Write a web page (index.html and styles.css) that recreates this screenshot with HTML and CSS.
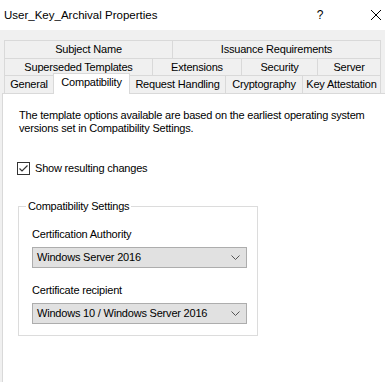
FILE: index.html
```html
<!DOCTYPE html>
<html lang="en">
<head>
    <meta charset="UTF-8">
    <title>User_Key_Archival Properties</title>
    <link rel="stylesheet" href="styles.css">
</head>
<body>
    <div class="window">
        <div class="title-bar">
            <span class="title">User_Key_Archival Properties</span>
            <span class="help">?</span>
            <svg class="close" width="12" height="12" viewBox="0 0 12 12">
                <path d="M1 1 L11 11 M11 1 L1 11" stroke="#000" stroke-width="1" fill="none"/>
            </svg>
        </div>

        <div class="body">
            <div class="tabs">
                <div class="tab-row row-1">
                    <div class="tab t-subject">Subject Name</div>
                    <div class="tab t-issuance">Issuance Requirements</div>
                </div>
                <div class="tab-row row-2">
                    <div class="tab t-superseded">Superseded Templates</div>
                    <div class="tab t-extensions">Extensions</div>
                    <div class="tab t-security">Security</div>
                    <div class="tab t-server">Server</div>
                </div>
                <div class="tab-row row-3">
                    <div class="tab t-general">General</div>
                    <div class="tab t-compat active">Compatibility</div>
                    <div class="tab t-request">Request Handling</div>
                    <div class="tab t-crypto">Cryptography</div>
                    <div class="tab t-key">Key Attestation</div>
                </div>
            </div>

            <div class="panel">
                <p class="intro">The template options available are based on the earliest operating system versions set in Compatibility Settings.</p>

                <label class="check">
                    <span class="box">
                        <svg width="11" height="11" viewBox="0 0 11 11">
                            <path d="M1.5 5.5 L4 8 L9.5 2.5" stroke="#333" stroke-width="1.2" fill="none"/>
                        </svg>
                    </span>
                    Show resulting changes
                </label>

                <fieldset class="group">
                    <legend>Compatibility Settings</legend>

                    <div class="field-label">Certification Authority</div>
                    <div class="select">
                        <span>Windows Server 2016</span>
                        <svg class="chevron" width="9" height="5" viewBox="0 0 9 5">
                            <path d="M0.5 0.5 L4.5 4.5 L8.5 0.5" stroke="#555" stroke-width="1" fill="none"/>
                        </svg>
                    </div>

                    <div class="field-label">Certificate recipient</div>
                    <div class="select">
                        <span>Windows 10 / Windows Server 2016</span>
                        <svg class="chevron" width="9" height="5" viewBox="0 0 9 5">
                            <path d="M0.5 0.5 L4.5 4.5 L8.5 0.5" stroke="#555" stroke-width="1" fill="none"/>
                        </svg>
                    </div>
                </fieldset>
            </div>
        </div>
    </div>
</body>
</html>
```

FILE: styles.css
```css
body {
    margin: 0;
    font-family: "Liberation Sans", Arial, sans-serif;
    font-size: 11px;
    letter-spacing: -0.2px;
    line-height: 13px;
    color: #000;
    background-color: #fff;
}

.window {
    width: 385px;
    height: 382px;
    display: flex;
    flex-direction: column;
    overflow: hidden;
}

.title-bar {
    height: 30px;
    display: flex;
    align-items: center;
    background-color: #fff;
    padding-left: 4px;
}

.title {
    flex: 1;
    font-size: 11.5px;
    letter-spacing: 0;
}

.help {
    width: 16px;
    text-align: center;
    font-size: 12px;
    margin-right: 42px;
}

.close {
    margin-right: 3px;
}

.body {
    flex: 1;
    display: flex;
    flex-direction: column;
    background-color: #f0f0f0;
    padding-top: 10px;
    padding-left: 2px;
}

.tabs {
    padding-left: 2px;
    width: 377px;
}

.tab-row {
    display: flex;
}

.row-1 {
    height: 18px;
}

.row-2 {
    height: 17px;
}

.row-3 {
    height: 18px;
}

.tab {
    box-sizing: border-box;
    border-top: 1px solid #d9d9d9;
    border-left: 1px solid #d9d9d9;
    background-color: #f0f0f0;
    text-align: center;
    line-height: 16px;
    white-space: nowrap;
}

.tab:last-child {
    border-right: 1px solid #d9d9d9;
}

.t-subject { width: 168px; }
.t-issuance { flex: 1; }

.t-superseded { width: 148px; }
.t-extensions { width: 89px; }
.t-security { width: 76px; }
.t-server { flex: 1; }

.t-general { width: 49px; }
.t-compat { width: 77px; }
.t-request { width: 95px; }
.t-crypto { width: 77px; }
.t-key { flex: 1; }

.tab.active {
    position: relative;
    z-index: 1;
    background-color: #fff;
    border-right: 1px solid #d9d9d9;
    margin-top: -2px;
    height: 21px;
    line-height: 17px;
}

.tab.active + .tab {
    border-left: none;
}

.panel {
    flex: 1;
    background-color: #fff;
    border-top: 1px solid #d9d9d9;
    border-left: 1px solid #d9d9d9;
    padding: 15px 0 0 16px;
}

.intro {
    margin: 0;
    width: 355px;
}

.check {
    display: flex;
    align-items: center;
    margin: 27px 0 0 -2px;
    gap: 5px;
}

.box {
    width: 11px;
    height: 11px;
    border: 1px solid #333;
    display: flex;
    align-items: center;
    justify-content: center;
}

.group {
    margin: 25px 0 0 -1px;
    width: 240px;
    box-sizing: border-box;
    border: 1px solid #dcdcdc;
    padding: 15px 10px 11px 13px;
}

.group legend {
    padding: 0 2px;
    margin-left: -6px;
    line-height: 13px;
}

.field-label {
    margin-bottom: 6px;
}

.select {
    width: 215px;
    height: 21px;
    box-sizing: border-box;
    border: 1px solid #adadad;
    background-color: #e1e1e1;
    display: flex;
    align-items: center;
    justify-content: space-between;
    padding: 0 6px 0 4px;
    margin-bottom: 16px;
}

.select:last-child {
    margin-bottom: 0;
}
```
